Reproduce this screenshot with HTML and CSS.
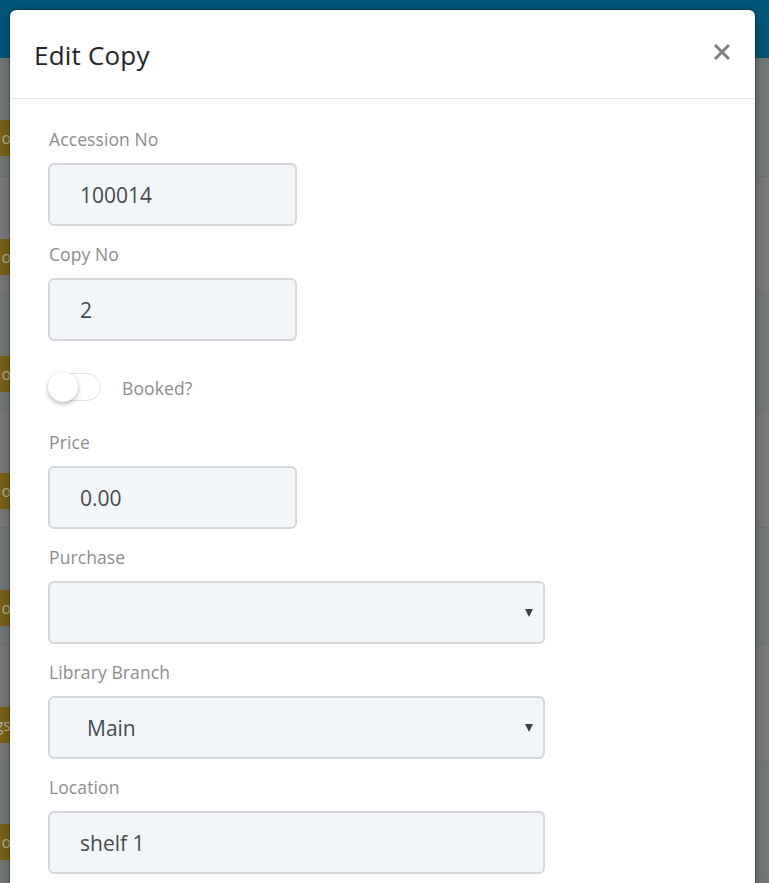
FILE: index.html
```html
<!DOCTYPE html>
<html lang="en">
<head>
<meta charset="utf-8">
<title>Edit Copy</title>
<link rel="stylesheet" href="styles.css">
</head>
<body>
<div class="page">
  <div class="topbar"></div>
  <div class="rows">
    <div class="row"><span class="badge"><span>No</span></span></div>
    <div class="row alt"><span class="badge"><span>No</span></span></div>
    <div class="row"><span class="badge"><span>No</span></span></div>
    <div class="row alt"><span class="badge"><span>No</span></span></div>
    <div class="row"><span class="badge"><span>No</span></span></div>
    <div class="row alt"><span class="badge"><span>Bags</span></span></div>
    <div class="row"><span class="badge"><span>No</span></span></div>
  </div>
</div>

<div class="modal">
  <div class="modal-header">
    <h1 class="modal-title">Edit Copy</h1>
    <button class="close" type="button" aria-label="Close">
      <svg width="18" height="18" viewBox="0 0 18 18"><path d="M2 2 L16 16 M16 2 L2 16" stroke="#808080" stroke-width="3" stroke-linecap="butt"/></svg>
    </button>
  </div>
  <form class="modal-body">
    <div class="group">
      <label class="label">Accession No</label>
      <input class="field" type="text" value="100014">
    </div>
    <div class="group">
      <label class="label">Copy No</label>
      <input class="field" type="text" value="2">
    </div>
    <div class="toggle-row">
      <span class="switch"><span class="knob"></span></span>
      <span class="toggle-label">Booked?</span>
    </div>
    <div class="group">
      <label class="label">Price</label>
      <input class="field" type="text" value="0.00">
    </div>
    <div class="group">
      <label class="label">Purchase</label>
      <div class="select-wrap">
        <select class="field wide select"><option></option></select>
        <span class="caret"></span>
      </div>
    </div>
    <div class="group">
      <label class="label">Library Branch</label>
      <div class="select-wrap">
        <select class="field wide select"><option>Main</option></select>
        <span class="caret"></span>
      </div>
    </div>
    <div class="group">
      <label class="label">Location</label>
      <input class="field wide" type="text" value="shelf 1">
    </div>
  </form>
</div>
</body>
</html>
```
FILE: styles.css
```css
html, body {
  margin: 0;
  padding: 0;
  height: 883px;
  overflow: hidden;
}
body {
  font-family: "Open Sans", "Noto Sans", sans-serif;
  background: #7a7a7a;
  position: relative;
}
.page {
  display: flex;
  flex-direction: column;
}
.topbar {
  height: 58px;
  background: #02577a;
}
.rows {
  display: flex;
  flex-direction: column;
}
.row {
  height: 117px;
  border-bottom: 1px solid #6f7474;
  background: #747a7a;
  padding-top: 62px;
  box-sizing: border-box;
}
.row:first-child {
  height: 119px;
}
.row.alt {
  background: #7b7b7b;
}
.badge {
  display: flex;
  justify-content: flex-end;
  align-items: center;
  width: 10px;
  height: 36px;
  overflow: hidden;
  background: #7d6217;
  color: #b8b09c;
  font-size: 16px;
  white-space: nowrap;
}
.badge span {
  margin-right: -1px;
}

.modal {
  position: absolute;
  top: 10px;
  left: 10px;
  width: 745px;
  height: 940px;
  background: #fff;
  border-radius: 6px;
  box-shadow: 0 0 0 1px rgba(0, 0, 0, 0.25), 0 4px 16px rgba(0, 0, 0, 0.3);
}
.modal-header {
  height: 88px;
  border-bottom: 1px solid #e3e7eb;
  display: flex;
  align-items: center;
  justify-content: space-between;
  padding: 0 24px;
}
.modal-title {
  margin: 0;
  font-size: 26px;
  font-weight: 400;
  color: #212529;
  letter-spacing: 0.2px;
  position: relative;
  top: 1px;
}
.close {
  border: 0;
  background: none;
  padding: 0;
  width: 18px;
  height: 18px;
  display: flex;
  position: relative;
  top: -2px;
}
.modal-body {
  display: flex;
  flex-direction: column;
  padding: 28px 0 0 38px;
  margin: 0;
}
.group {
  display: flex;
  flex-direction: column;
  align-items: flex-start;
  margin-bottom: 16px;
}
.label {
  font-size: 17.5px;
  line-height: 24px;
  color: #8c8c8c;
  letter-spacing: 0.1px;
  margin-bottom: 12px;
  padding-left: 1px;
}
.field {
  box-sizing: border-box;
  width: 249px;
  height: 63px;
  border: 2px solid #d3d7dc;
  border-radius: 6px;
  background: #f3f6f9;
  padding: 0 30px;
  font-family: "Open Sans", "Noto Sans", sans-serif;
  font-size: 21px;
  color: #454a4f;
  outline: none;
  margin: 0;
}
.field.wide {
  width: 497px;
}
.select-wrap {
  position: relative;
  display: flex;
}
.select {
  -webkit-appearance: none;
  appearance: none;
  padding-left: 37px;
}
.caret {
  position: absolute;
  right: 12px;
  top: 28px;
  width: 0;
  height: 0;
  border-left: 4px solid transparent;
  border-right: 4px solid transparent;
  border-top: 8px solid #3d4045;
}
.toggle-row {
  display: flex;
  align-items: center;
  height: 30px;
  margin: 15px 0 28px;
}
.switch {
  position: relative;
  box-sizing: border-box;
  width: 53px;
  height: 28px;
  border: 1px solid #e2e2e2;
  border-radius: 14px;
  background: #fff;
}
.knob {
  position: absolute;
  left: -1px;
  top: -2px;
  width: 30px;
  height: 30px;
  border-radius: 50%;
  background: #fff;
  box-shadow: 0 2px 5px rgba(0, 0, 0, 0.3);
}
.toggle-label {
  margin-left: 21px;
  font-size: 17.5px;
  letter-spacing: 0.1px;
  color: #8c8c8c;
  position: relative;
  top: 1px;
}
```
